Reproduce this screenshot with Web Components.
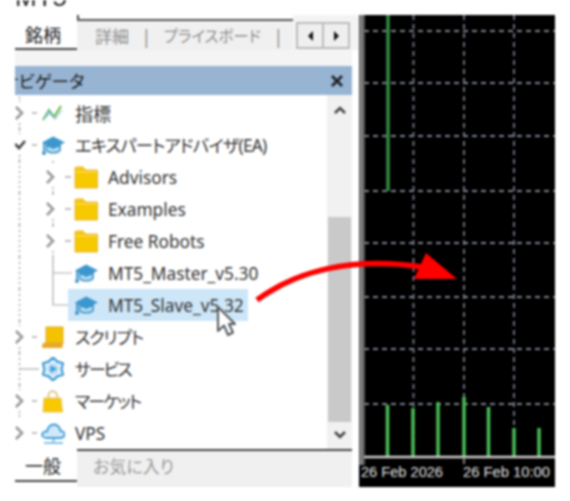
<!DOCTYPE html>
<html lang="ja">
<head>
<meta charset="utf-8">
<title>MT5</title>
<style>
html,body{margin:0;padding:0;background:#fff}
body{width:570px;height:501px;overflow:hidden;font-family:"Noto Sans","Noto Sans CJK JP",sans-serif}
</style>
</head>
<body>
<x-stage>
  <x-navigator slot="nav"></x-navigator>
  <x-chart slot="chart"></x-chart>
  <x-arrow slot="over"></x-arrow>
  <x-cursor slot="over"></x-cursor>
</x-stage>
<script>
const gear=(()=>{let p=[];for(let i=0;i<12;i++){const a=(-90+30*i)*Math.PI/180,r=i%2?8.6:11.6;p.push((12+r*Math.cos(a)).toFixed(1)+','+(12+r*Math.sin(a)).toFixed(1))}return p.join(' ')})();
const ICONS={
 indicator:`<path d="M2 19 L8 9 L13 16" fill="none" stroke="#6cc08b" stroke-width="2.2"/><path d="M13 16 L20 5" fill="none" stroke="#6fb83f" stroke-width="2.2"/><path d="M5 16 L9 12 L14 18 L21 9" fill="none" stroke="#6aa8d8" stroke-width="1.2" opacity=".7"/>`,
 cap:`<path d="M5.5 12v5.5c2.5 3 11 3 13.5 0V12l-6.7 3.2z" fill="#b5dcf2" stroke="#3d94c9" stroke-width="1.6"/><path d="M12.2 3.5 L24 9.5 L12.2 15.5 L1 9.5Z" fill="#3d97cf"/><path d="M3 10v8" stroke="#3d94c9" stroke-width="1.8"/><circle cx="3" cy="20" r="2" fill="#3d94c9"/>`,
 folder:`<path d="M1 3.5A1.5 1.5 0 0 1 2.500 2H9l2.500 3H23.500V23H1Z" fill="#f8c800" stroke="#e3b84a" stroke-width="1"/><path d="M1.500 7H23" stroke="#fbe08a" stroke-width="1"/>`,
 script:`<path d="M5 2H22V19H5Z" fill="#f5c200" stroke="#e0a92c" stroke-width="1"/><path d="M1 22c0-3 1-4.500 3.500-4.500H22.500c-1 1-1 3-1 5.500H3c-1 0-2-.3-2-1z" fill="#e6a92a"/>`,
 service:`<polygon points="${gear}" fill="#e3f1fb" stroke="#3f9bd6" stroke-width="2.200" stroke-linejoin="round"/><circle cx="12" cy="12" r="5.500" fill="#b5dbf4"/><path d="M9.500 8.500L16 12l-6.500 3.500z" fill="#3f9bd6"/>`,
 bag:`<path d="M3 9H20L21.500 23H2Z" fill="#f8c800" stroke="#ecc76a" stroke-width="1"/><path d="M7.500 10V6.500a4.200 4.200 0 0 1 8.500 0V10" fill="none" stroke="#d9c38a" stroke-width="1.800"/>`,
 cloud:`<path d="M6 17C2 17 .5 14.500 1.500 12.500S5 10 6 10.500C7 6 10 3.500 13 3.500s6 2.500 6.500 6.500c3 0 4.500 2 4 4.200S21 17 19 17Z" fill="#cfe9fa" stroke="#3f9bd6" stroke-width="1.800"/><path d="M12.500 17v4M3 22H22" stroke="#5aaee0" stroke-width="1.600"/>`
};

class XStage extends HTMLElement{
 constructor(){super();this.attachShadow({mode:'open'}).innerHTML=`<style>
 :host{display:block;position:relative;width:570px;height:501px;overflow:hidden;filter:blur(.85px)}
 .head{height:15px;overflow:hidden;padding-left:15px;font:26px/26px "Liberation Sans",sans-serif;color:#222}
 .head span{display:block;margin-top:-16px}
 .work{display:flex;margin-left:15px;height:472px;width:540px}
 </style>
 <div class="head"><span>MT5</span></div>
 <div class="work"><slot name="nav"></slot><slot name="chart"></slot></div>
 <slot name="over"></slot>`}
}
class XTabs extends HTMLElement{
 constructor(){super();const top=this.hasAttribute('top');const a=this.getAttribute('active');
 this.attachShadow({mode:'open'}).innerHTML=`<style>
 :host{display:flex;height:${top?35:38}px;font:18px/1 "Noto Sans CJK JP",sans-serif;font-feature-settings:"palt";background:#fff}
 .a{box-sizing:border-box;width:64px;padding-left:10px;height:${top?35:33}px;border-right:2px solid #444;border-bottom:2px solid #444;background:#fff;color:#222;display:flex;align-items:center;flex:none;${top?'padding-top:4px':''}}
 .r{flex:1;box-sizing:border-box;background:#f0f0f0;color:#8e8e8e;display:flex;align-items:center;min-width:0;
   margin-left:-2px;${top?'margin-top:4px;border-top:2px solid #555;margin-right:66px':'border-top:2px solid #444;margin-right:7px;padding-bottom:8px'}}
 .tail{flex:none;width:66px;margin-left:-66px;position:relative}
 </style><div class="a">${a}</div><div class="r"><slot></slot></div>${top?'<div class="tail"><slot name="tail"></slot></div>':''}`}
}
class XScrollBtns extends HTMLElement{
 constructor(){super();this.attachShadow({mode:'open'}).innerHTML=`<style>
 :host{display:flex;height:100%;background:#f3f3f3;padding:7px 8px 1px 3px;box-sizing:border-box}
 b{box-sizing:border-box;width:28px;height:27px;border:2px solid #bbb;background:#efefef;display:grid;place-items:center}
 b+b{margin-left:-2px}
 i{display:block;width:0;height:0;border:5px solid transparent}
 .l{border-right-color:#111;border-left-width:0}.n{border-left-color:#111;border-right-width:0}
 </style><b><i class="l"></i></b><b><i class="n"></i></b>`}
}
class XTitle extends HTMLElement{
 constructor(){super();this.attachShadow({mode:'open'}).innerHTML=`<style>
 :host{display:flex;align-items:center;height:29px;background:#97b4d3;overflow:hidden;color:#222;font:17.500px/1 "Noto Sans CJK JP",sans-serif;font-feature-settings:"palt";margin-right:7px}
 span{margin-left:-13px;flex:1;white-space:nowrap}
 svg{margin-right:8px}
 </style><span><slot></slot></span><svg width="14" height="14" viewBox="0 0 14 14"><path d="M2 2L12 12M12 2L2 12" stroke="#1f2329" stroke-width="2.800"/></svg>`}
}
class XRow extends HTMLElement{
 constructor(){super();
 const lvl=+this.getAttribute('level')||1, ch=this.getAttribute('chev')||'', ic=this.getAttribute('icon'), sel=this.hasAttribute('selected');
 const g=(this.getAttribute('guides')||'').split(' ').filter(Boolean);
 const w=lvl==1?26:59;
 const cx=lvl==1?4:35, dash=lvl==1?[17,22]:[50,56];
 let s='';
 for(const t of g){
  if(t=='a')s+=`<path d="M4.500 0V32" stroke="#aaa" stroke-dasharray="2 3" stroke-width="1.500"/>`;
  if(t=='at')s+=`<path d="M4.500 0V5M4.500 26V32" stroke="#aaa" stroke-dasharray="2 2" stroke-width="1.500"/>`;
  if(t=='bt')s+=`<path d="M38 0V4M38 26V32" stroke="#aaa" stroke-dasharray="2 2" stroke-width="1.500"/>`;
  if(t=='be')s+=`<path d="M38 0V16H57" fill="none" stroke="#aaa" stroke-width="1.200"/>`;
  if(t=='bs')s+=`<path d="M38 0V32M38 16H57" fill="none" stroke="#aaa" stroke-width="1.200"/>`;
  if(t=='ae')s+=`<path d="M5 16H24" stroke="#aaa" stroke-width="1.200"/>`;
 }
 if(ch=='r')s+=`<path d="M${cx-3} 10L${cx+3} 16L${cx-3} 22" fill="none" stroke="#999" stroke-width="2.600"/>`;
 if(ch=='d')s+=`<path d="M${cx-4} 15L${cx} 19L${cx+6} 12" fill="none" stroke="#444" stroke-width="2.600"/>`;
 if(ch)s+=`<path d="M${dash[0]} 16H${dash[1]}" stroke="#aaa" stroke-width="1.500"/>`;
 const fs=this.getAttribute('fs')||17.3, ls=this.getAttribute('ls')||0;
 this.attachShadow({mode:'open'}).innerHTML=`<style>
 :host{display:flex;align-items:center;height:32px;color:#333;font:${fs}px/1 "Noto Sans","Noto Sans CJK JP",sans-serif;font-feature-settings:"palt";white-space:nowrap}
 svg{flex:none;display:block}
 .sel{display:flex;align-items:center;height:32px;${sel?'background:#cde6f8;margin-left:-6px;padding-left:6px;padding-right:4px;':''}}
 .ic{margin-right:10px}
 span{letter-spacing:${ls}px;padding-top:1px}
 </style>
 <svg width="${w}" height="32" viewBox="0 0 ${w} 32">${s}</svg>
 <div class="sel"><svg class="ic" width="24" height="24" viewBox="0 0 24 24">${ICONS[ic]}</svg><span><slot></slot></span></div>`}
}
class XScrollbar extends HTMLElement{
 constructor(){super();this.attachShadow({mode:'open'}).innerHTML=`<style>
 :host{display:grid;grid-template-rows:122px 205px 27px;width:25px;background:#f1f1f1;flex:none;margin-right:7px}
 .u,.d{display:flex;justify-content:center}.u{padding-top:10px;box-sizing:border-box}
 .t{background:#c9c9c9;margin:0 1px 0 1px}
 .d{align-items:flex-start;padding-top:8px;box-sizing:border-box}
 </style>
 <div class="u"><svg width="14" height="10" viewBox="0 0 14 10"><path d="M2 8L7 3L12 8" fill="none" stroke="#444" stroke-width="2.600"/></svg></div>
 <div class="t"></div>
 <div class="d"><svg width="14" height="10" viewBox="0 0 14 10"><path d="M2 2L7 7L12 2" fill="none" stroke="#444" stroke-width="2.600"/></svg></div>`}
}
class XNavigator extends HTMLElement{
 constructor(){super();this.attachShadow({mode:'open'}).innerHTML=`<style>
 :host{display:flex;flex-direction:column;width:344px;height:472px;flex:none;background:#fff}
 .gap{height:16px;background:#f4f4f4;margin-right:7px}
 .body{display:flex;height:354px;overflow:hidden}
 .tree{flex:1;min-width:0;padding-top:2px;overflow:hidden}
 .x{font-size:15px;white-space:nowrap;display:flex;align-items:center;width:100%}
 .x span{margin-left:18px}.x em{font-style:normal;margin-left:15px;color:#777;font-size:17px}
 .f{margin-left:16px;font-size:17px;color:#9a9a9a;white-space:nowrap}
 </style>
 <x-tabs top active="銘柄">
   <div class="x" part="x"><span style="margin-left:18px;font-size:17px">詳細</span><em>|</em><span style="margin-left:15px;font-size:15.500px">プライスボード</span><em>|</em></div>
   <x-scroll-btns slot="tail"></x-scroll-btns>
 </x-tabs>
 <div class="gap"></div>
 <x-title>ナビゲータ</x-title>
 <div class="body">
  <div class="tree">
   <x-row level="1" chev="r" icon="indicator" guides="at" fs="18">指標</x-row>
   <x-row level="1" chev="d" icon="cap" guides="at" fs="17.300" ls="-.8">エキスパートアドバイザ(EA)</x-row>
   <x-row level="2" chev="r" icon="folder" guides="a bt">Advisors</x-row>
   <x-row level="2" chev="r" icon="folder" guides="a bt">Examples</x-row>
   <x-row level="2" chev="r" icon="folder" guides="a bt">Free Robots</x-row>
   <x-row level="2" icon="cap" guides="a bs">MT5_Master_v5.30</x-row>
   <x-row level="2" icon="cap" selected guides="a be">MT5_Slave_v5.32</x-row>
   <x-row level="1" chev="r" icon="script" guides="at" fs="17" ls="-1">スクリプト</x-row>
   <x-row level="1" icon="service" guides="a ae" fs="17" ls="-2">サービス</x-row>
   <x-row level="1" chev="r" icon="bag" guides="at" fs="17" ls="-1.800">マーケット</x-row>
   <x-row level="1" chev="r" icon="cloud">VPS</x-row>
  </div>
  <x-scrollbar></x-scrollbar>
 </div>
 <x-tabs active="一般"><span class="f">お気に入り</span></x-tabs>`}
}
class XChart extends HTMLElement{
 constructor(){super();
 const X=v=>v-359,Y=v=>v-15;
 const hs=[31,83,136,191,243,297,349,404], vs=[413.5,464,514];
 const bars=[[387.5,405],[413,408],[438,402],[464,397],[488.5,407],[514,428],[539,428]];
 let s='';
 hs.forEach(y=>s+=`<path d="M5 ${Y(y)}H196" stroke="#7d8290" stroke-width="1.800" stroke-dasharray="5 4"/>`);
 vs.forEach(x=>s+=`<path d="M${X(x)} 0V${Y(457)}" stroke="#767c8a" stroke-width="1.800" stroke-dasharray="5 4"/>`);
 s+=`<path d="M${X(388)} 0V${Y(191)}" stroke="#348a42" stroke-width="3.500"/>`;
 bars.forEach(([x,t])=>s+=`<path d="M${X(x)} ${Y(t)}V${Y(457)}" stroke="#49bd56" stroke-width="3.500"/>`);
 s+=`<path d="M5 ${Y(457)}H196" stroke="#d0d0d0" stroke-width="2.500"/>`;
 s+=`<path d="M${X(464)} ${Y(457)}V${Y(464)}" stroke="#aaa" stroke-width="1.500"/>`;
 this.attachShadow({mode:'open'}).innerHTML=`<style>
 :host{display:block;width:196px;height:472px;background:#000;flex:none;color:#ccc}
 svg{display:block}
 text{font:14px "Liberation Sans",sans-serif;fill:#e0e0e0}
 </style><svg width="196" height="472" viewBox="0 0 196 472">
 <rect x="0" y="0" width="2" height="450" fill="#5a5a5a"/><rect x="2" y="0" width="1" height="450" fill="#bbb"/><rect x="3" y="0" width="3" height="450" fill="#5a5a5a"/>
 ${s}
 <text x="2" y="${Y(477)}" textLength="82" lengthAdjust="spacingAndGlyphs">26 Feb 2026</text>
 <text x="104" y="${Y(477)}" textLength="87" lengthAdjust="spacingAndGlyphs">26 Feb 10:00</text>
 </svg>`}
}
class XArrow extends HTMLElement{
 constructor(){super();this.attachShadow({mode:'open'}).innerHTML=`<style>
 :host{position:absolute;left:250px;top:245px;width:215px;height:65px;display:block}
 svg{display:block}
 </style><svg width="215" height="65" viewBox="250 245 215 65"><path d="M257 300C295 272 350 256 422 267" fill="none" stroke="#f00" stroke-width="5.500"/><path d="M426 253L457 279H414Z" fill="#f00"/></svg>`}
}
class XCursor extends HTMLElement{
 constructor(){super();this.attachShadow({mode:'open'}).innerHTML=`<style>
 :host{position:absolute;left:214px;top:304px;width:24px;height:36px;display:block}
 svg{display:block}
 </style><svg width="24" height="36" viewBox="0 0 24 36"><path d="M4 3V27L10 21.500L14 31L19 28.500L15 20H21Z" fill="#fff" stroke="#555a5e" stroke-width="2" stroke-linejoin="round"/></svg>`}
}
customElements.define('x-stage',XStage);
customElements.define('x-tabs',XTabs);
customElements.define('x-scroll-btns',XScrollBtns);
customElements.define('x-title',XTitle);
customElements.define('x-row',XRow);
customElements.define('x-scrollbar',XScrollbar);
customElements.define('x-navigator',XNavigator);
customElements.define('x-chart',XChart);
customElements.define('x-arrow',XArrow);
customElements.define('x-cursor',XCursor);
</script>
</body>
</html>
